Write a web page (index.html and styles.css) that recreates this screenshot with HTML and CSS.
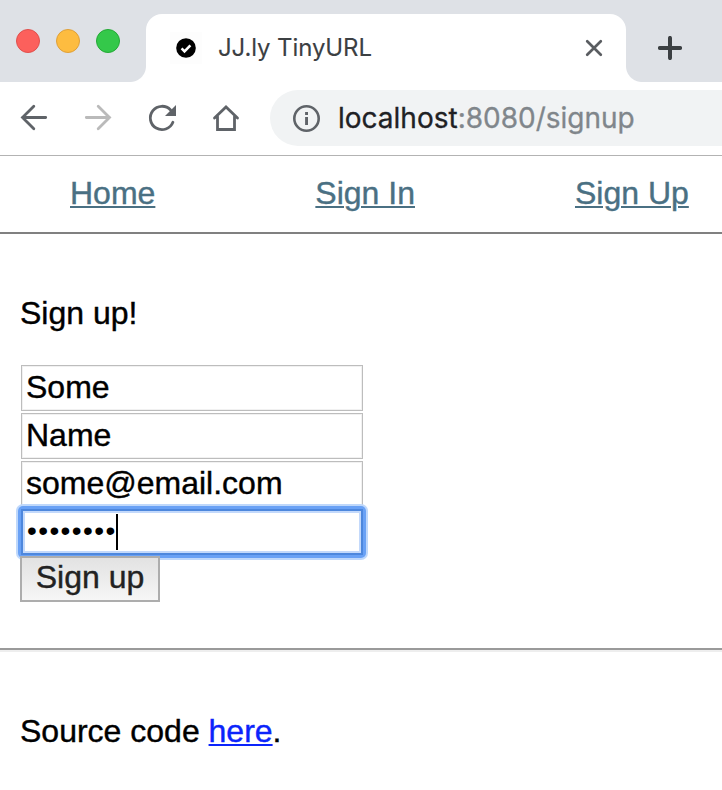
FILE: index.html
```html
<!DOCTYPE html>
<html lang="en">
<head>
<meta charset="utf-8">
<title>JJ.ly TinyURL</title>
<link rel="stylesheet" href="styles.css">
</head>
<body>
<div class="tabstrip">
  <div class="lights">
    <span class="light red"></span>
    <span class="light yellow"></span>
    <span class="light green"></span>
  </div>
  <div class="tab">
    <span class="favicon">
      <svg width="20" height="20" viewBox="0 0 20 20"><circle cx="10" cy="10" r="9.8"/><path d="M5.6 10.4l2.9 2.9 5.9-6" fill="none" stroke="#fff" stroke-width="2.6"/></svg>
    </span>
    <span class="tab-title">JJ.ly TinyURL</span>
    <svg class="tab-close" width="20" height="20" viewBox="0 0 20 20"><path d="M3.2 3.2l13.6 13.6M16.8 3.2L3.2 16.8" stroke="#5a5d61" stroke-width="2.7" stroke-linecap="round"/></svg>
  </div>
  <svg class="new-tab" width="24" height="24" viewBox="0 0 24 24"><path d="M12 1.9v20.2M1.9 12h20.2" stroke="#3c4043" stroke-width="4" stroke-linecap="round"/></svg>
</div>
<div class="toolbar">
  <svg class="tool" viewBox="18 102 32 32"><path d="M45.7 117.5H22.5M33.8 106.3L22.5 117.5l11.3 11.2"/></svg>
  <svg class="tool disabled" viewBox="82 102 32 32"><path d="M86.3 117.5h23.2M98.200 106.300l11.300 11.200-11.300 11.200"/></svg>
  <svg class="tool" viewBox="146 102 32 32"><path d="M172.900 122.300A11.700 11.700 0 1 1 170.600 110"/><path class="solid" d="M176 105v11h-11z"/></svg>
  <svg class="tool" viewBox="210 102 32 32"><path d="M217.500 116.500v13h17v-13M214.500 118L226 107l11.500 11"/></svg>
  <div class="omnibox">
    <svg class="info" width="28" height="28" viewBox="0 0 28 28"><circle cx="14.500" cy="14.500" r="12.200" fill="none" stroke="#5f6368" stroke-width="2.600"/><path d="M13.100 13.100h2.900v7.800h-2.900zM13.100 8.100h2.900v2.800h-2.900z" fill="#5f6368"/></svg>
    <span class="url"><span class="host">localhost</span>:8080/signup</span>
  </div>
</div>
<nav class="nav">
  <a href="#">Home</a>
  <a href="#">Sign In</a>
  <a href="#">Sign Up</a>
</nav>
<main>
  <p class="heading">Sign up!</p>
  <form class="form">
    <input type="text" value="Some">
    <input type="text" value="Name">
    <input type="text" value="some@email.com">
    <div class="focused">
      <input type="password" value="password">
      <span class="caret"></span>
    </div>
    <button type="button">Sign up</button>
  </form>
</main>
<footer>Source code <a href="#">here</a>.</footer>
</body>
</html>
```
FILE: styles.css
```css
* { box-sizing: border-box; }

body {
  margin: 0;
  height: 790px;
  overflow: hidden;
  background: #fff;
  color: #000;
  font: 32px/36px "Liberation Sans", Arial, sans-serif;
  -webkit-text-stroke: 0.4px;
}

svg { display: block; flex: none; }

.tabstrip {
  display: flex;
  height: 82px;
  background: #dee1e6;
}

.lights {
  display: flex;
  gap: 16px;
  width: 146px;
  padding: 29px 0 0 16px;
}

.light {
  width: 24px;
  height: 24px;
  border: 1px solid;
  border-radius: 50%;
}

.red { background: #fc605c; border-color: #e0504d; }
.yellow { background: #fdbc40; border-color: #dfa039; }
.green { background: #34c84a; border-color: #24a936; }

.tab {
  position: relative;
  display: flex;
  align-items: center;
  width: 480px;
  height: 68px;
  margin-top: 14px;
  padding: 0 22px 0 24px;
  border-radius: 16px 16px 0 0;
  background: #fff;
}

.tab::before,
.tab::after {
  content: "";
  position: absolute;
  bottom: 0;
  width: 16px;
  height: 16px;
}

.tab::before {
  left: -16px;
  background: radial-gradient(circle at 0 0, transparent 15.5px, #fff 16.5px);
}

.tab::after {
  right: -16px;
  background: radial-gradient(circle at 100% 0, transparent 15.5px, #fff 16.5px);
}

.favicon {
  display: grid;
  place-items: center;
  width: 32px;
  height: 32px;
  background: #fdfdfd;
}

.tab-title {
  flex: 1;
  margin-left: 16px;
  color: #3c4043;
  font-family: Inter, sans-serif;
  font-size: 24px;
  letter-spacing: -0.1px;
  white-space: nowrap;
  -webkit-text-stroke: 0.1px;
}

.new-tab { margin: 36px 0 0 32px; }

.toolbar {
  display: flex;
  align-items: center;
  gap: 32px;
  height: 74px;
  padding: 8px 0 9px 18px;
  border-bottom: 1px solid #b3b3b3;
}

.tool {
  width: 32px;
  height: 32px;
  fill: none;
  stroke: #5f6368;
  stroke-width: 2.8;
  stroke-linecap: round;
}

.disabled { stroke: #bababa; }
.tool .solid { fill: #5f6368; stroke: none; }

.omnibox {
  display: flex;
  flex: 1;
  align-items: center;
  height: 56px;
  margin-left: -4px;
  padding-left: 22px;
  border-radius: 28px 0 0 28px;
  background: #f1f3f4;
}

.url {
  margin-left: 18px;
  color: #80868b;
  font-family: Inter, sans-serif;
  font-size: 28px;
  white-space: nowrap;
  -webkit-text-stroke: 0.3px;
}

.host { color: #202124; }

.nav {
  display: flex;
  gap: 160px;
  height: 78px;
  padding: 19px 0 0 70px;
  border-bottom: 2px solid #808080;
  white-space: nowrap;
}

.nav a { color: #4a7083; }

a {
  text-decoration-thickness: 2px;
  text-underline-offset: 2px;
}

main {
  height: 418px;
  padding: 61px 20px 0;
  border-bottom: 2px solid #eee;
  box-shadow: inset 0 -2px #9a9a9a;
}

.heading { margin: 0 0 34px; }

.form {
  display: flex;
  flex-direction: column;
  align-items: flex-start;
  gap: 2px;
}

input {
  display: block;
  width: 342px;
  height: 46px;
  margin: 0 0 0 1px;
  padding: 3px 4px 5px;
  border: 1px solid #bdbdbd;
  border-radius: 0;
  background: #fff;
  box-shadow: inset 0 0 0 1px #f1f1f1;
  color: #000;
  font: inherit;
}

.focused { position: relative; }

/* Focus ring around the field */
.focused::before {
  content: "";
  position: absolute;
  inset: -3px -3px -3px -2px;
  border-radius: 5px;
  background: #69a1f5;
  box-shadow: 0 0 0 2px #bfd8fb;
}

.focused input {
  position: relative;
  padding: 0 3px 3px 4px;
  border: 2px solid #4d87dd;
  box-shadow: inset 0 0 0 2px #c3d9fb;
  font-size: 28px;
  letter-spacing: 1.4px;
  -webkit-text-stroke: 0;
}

.caret {
  position: absolute;
  left: 96px;
  top: 5px;
  width: 2px;
  height: 36px;
  background: #000;
}

button {
  position: relative;
  width: 140px;
  height: 46px;
  margin-top: -1px;
  padding: 1px 0 5px;
  border: 2px solid #adadad;
  border-radius: 0;
  background: linear-gradient(#e2e2e2, #f6f6f6);
  color: #222;
  font: inherit;
}

footer { padding: 61px 20px 0; }
footer a { color: #0b24fb; }
```
